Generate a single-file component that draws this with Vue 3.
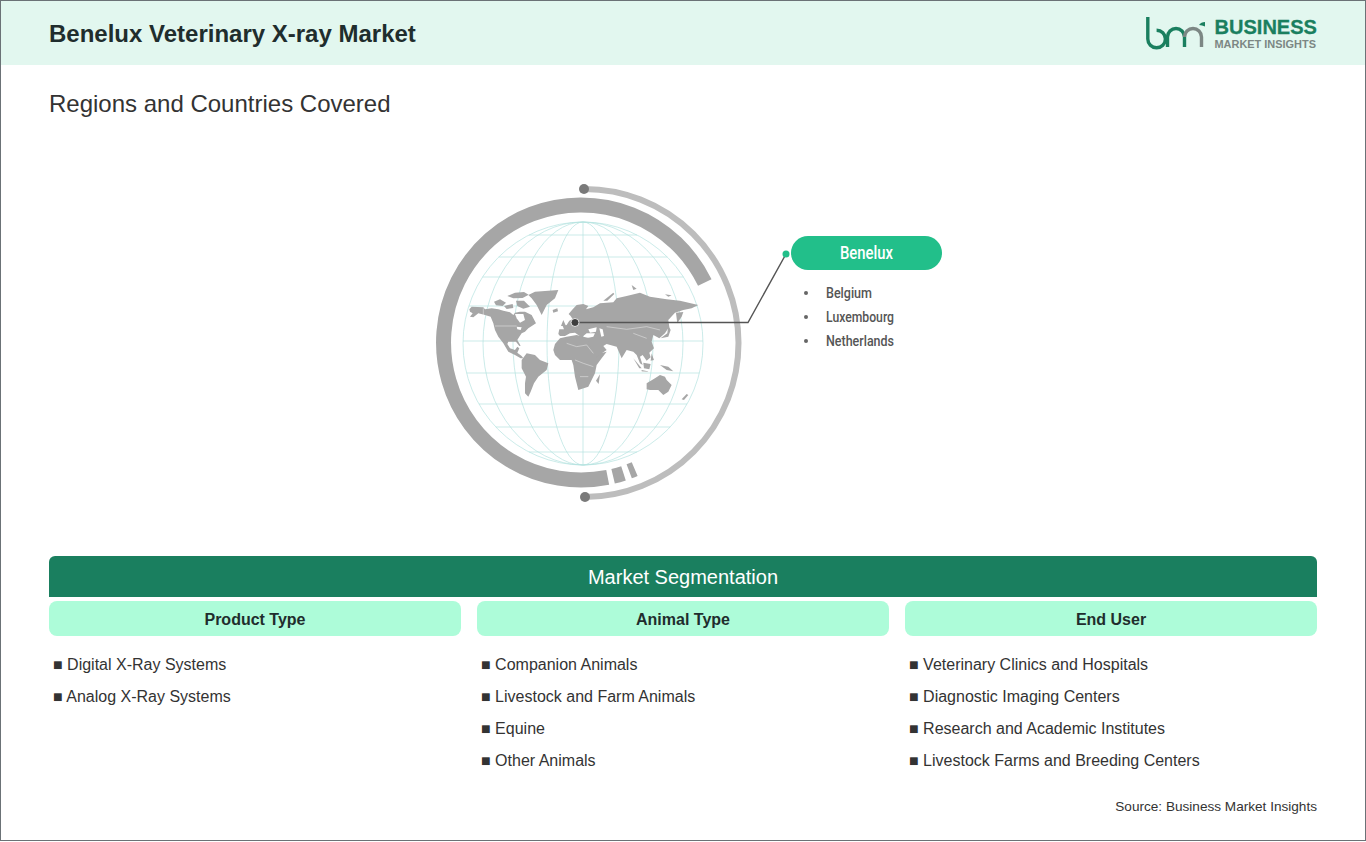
<template>
  <div class="report">
    <header class="report__header">
      <h1 class="report__title">Benelux Veterinary X-ray Market</h1>
      <svg class="logo" width="192" height="36" viewBox="1145 15 192 36">
        <g fill="none" stroke-width="3.400">
          <path d="M1147.800 17V39A8.800 8.800 0 1 0 1156.600 30.200" stroke="#1a7f5f" />
          <path d="M1167.500 47V37A8.500 8.500 0 0 1 1184.500 37V47" stroke="#1a7f5f" />
          <path d="M1184.500 37A8.500 8.500 0 0 1 1201.500 37V47" stroke="#7c8784" />
        </g>
        <path d="M1199 25Q1201 22 1205 22L1205 26.500L1202 25.500z" fill="#1a7f5f" />
        <text class="logo__big" x="1214.500" y="34" textLength="102.500" lengthAdjust="spacingAndGlyphs">BUSINESS</text>
        <text class="logo__small" x="1214.500" y="47.500" textLength="101.500" lengthAdjust="spacingAndGlyphs">MARKET INSIGHTS</text>
      </svg>
    </header>

    <h2 class="report__subtitle">Regions and Countries Covered</h2>

    <svg class="globe" width="1268" height="438" viewBox="49 118 1268 438">
      <!-- outer rings -->
      <path d="M704.800 282.600A137.500 137.500 0 1 0 607.700 477.400" fill="none" stroke="#a6a6a6" stroke-width="15" />
      <path d="M613.100 476.200A137.500 137.500 0 0 0 623.500 473.300" fill="none" stroke="#a6a6a6" stroke-width="15" />
      <path d="M629.200 471.300A137.500 137.500 0 0 0 634.700 469.100" fill="none" stroke="#a6a6a6" stroke-width="15" />
      <path d="M584 189A154 154 0 0 1 585 497" fill="none" stroke="#bdbdbd" stroke-width="6" />
      <circle cx="584" cy="189" r="5" fill="#7a7a7a" />
      <circle cx="585" cy="497" r="5" fill="#7a7a7a" />

      <!-- grid -->
      <g fill="none" stroke="#b4e3e0" stroke-width="0.700">
        <ellipse v-for="rx in meridians" :key="rx" cx="583" cy="343.500" :rx="rx" ry="121.500" />
        <line x1="583" y1="222" x2="583" y2="465" />
        <line v-for="l in latitudes" :key="l.y" :x1="l.x1" :y1="l.y" :x2="l.x2" :y2="l.y" />
      </g>

      <!-- land, points are in 3x coordinates -->
      <g transform="translate(420 170) scale(0.3333)">
        <polygon v-for="(pts, i) in land" :key="i" :points="pts" fill="#a6a6a6" />
        <polygon v-for="(pts, i) in water" :key="'w' + i" :points="pts" fill="#fff" />
        <polyline v-for="(pts, i) in borders" :key="'b' + i" :points="pts" fill="none" stroke="#fff" stroke-opacity="0.600" stroke-width="2" />
      </g>

      <!-- callout -->
      <path d="M575 322.500H748L786 254" fill="none" stroke="#555" stroke-width="1.400" />
      <circle cx="575" cy="322.500" r="4" fill="#3d3d3d" stroke="#fff" stroke-width="0.800" />
      <circle cx="786" cy="254" r="3.500" fill="#22bf8a" />
      <rect x="791" y="236" width="151" height="34" rx="17" fill="#22bf8a" />
      <text class="globe__pill" x="840" y="259" textLength="53" lengthAdjust="spacingAndGlyphs">Benelux</text>
      <g v-for="c in countries" :key="c.name">
        <circle cx="806" :cy="c.y - 5" r="2" fill="#666" />
        <text class="globe__item" x="826" :y="c.y" :textLength="c.w" lengthAdjust="spacingAndGlyphs">{{ c.name }}</text>
      </g>
    </svg>

    <section class="seg">
      <div class="seg__bar">Market Segmentation</div>
      <div class="seg__cols">
        <div v-for="col in columns" :key="col.title" class="seg__col">
          <div class="seg__head">{{ col.title }}</div>
          <ul class="seg__list">
            <li v-for="item in col.items" :key="item">■ {{ item }}</li>
          </ul>
        </div>
      </div>
    </section>

    <p class="report__source">Source: Business Market Insights</p>
  </div>
</template>

<script setup>
const meridians = [120, 100, 70, 36]

const latitudes = [235, 257, 277, 306, 341, 373, 404, 427, 452].map((y) => {
  const t = (y - 343.5) / 121.5
  const half = 120 * Math.sqrt(1 - t * t)
  return { y, x1: 583 - half, x2: 583 + half }
})

const land = [
  // north america
  '148,418 155,410 190,412 195,418 215,415 235,418 250,422 270,427 280,435 285,428 300,425 315,425 335,435 348,460 340,465 325,475 315,485 305,490 298,500 292,510 302,527 298,528 288,515 265,515 262,522 270,535 285,540 292,530 298,535 292,548 305,558 310,565 302,565 285,555 265,545 250,520 235,500 225,480 220,460 212,440 195,435 175,430 160,442 150,440 158,430 150,425',
  // greenland
  '325,375 345,365 415,360 405,385 380,405 365,435 350,405 335,385',
  // arctic islands
  '222,395 240,388 258,398 248,408 228,406',
  '262,378 285,368 312,366 326,374 308,384 280,385',
  '288,392 312,392 330,410 310,416 292,408',
  '252,408 278,402 280,414 260,417',
  // south america
  '305,570 320,550 345,555 360,570 385,580 380,600 355,620 342,640 332,665 325,680 315,670 315,640 318,620 305,595',
  // africa
  '400,540 405,522 420,505 440,500 470,495 490,500 510,505 525,520 540,550 560,545 545,565 530,585 525,610 505,650 475,660 465,620 460,585 455,570 420,570 405,555',
  // madagascar
  '528,632 540,613 536,642',
  // eurasia
  '415,492 418,478 432,478 428,468 440,465 448,452 458,448 452,438 446,432 458,418 470,405 490,402 505,408 498,418 520,412 540,400 580,397 590,385 620,378 660,368 690,380 740,388 780,392 835,405 815,415 790,420 765,428 745,450 748,470 735,490 718,505 700,495 695,515 702,535 688,548 692,562 680,572 668,555 660,560 668,585 660,580 650,555 640,545 620,540 605,565 590,530 560,522 550,528 560,540 528,562 510,525 498,505 520,500 525,490 500,490 490,498 485,510 478,497 465,488 450,490 435,498 420,498',
  // kamchatka
  '768,428 790,426 785,440 772,460',
  // japan
  '722,505 742,490 745,465 752,480 745,500',
  // uk, iceland
  '423,468 430,450 438,468',
  '398,420 412,415 414,424 400,428',
  // novaya zemlya, svalbard
  '550,392 580,368 583,372 562,392',
  '635,345 650,356 640,360',
  '735,373 755,376 745,380',
  // indonesia, philippines
  '640,565 665,595 658,595',
  '670,578 692,582 688,598 672,595',
  '695,550 702,570 692,572',
  '720,585 745,590 760,604 740,600',
  '665,600 690,605 665,604',
  // australia
  '680,640 705,625 720,615 735,620 740,630 755,645 745,665 730,675 715,660 690,660 680,658',
  // new zealand
  '785,688 800,672 805,675 792,690',
]

const water = [
  // hudson bay
  '285,432 310,432 315,450 300,458 290,445',
  // black sea, caspian
  '505,478 530,472 528,485 510,488',
  '538,475 548,478 552,498 544,500',
  // great lakes
  '290,470 305,472 302,480 292,478',
]

const borders = [
  '225,468 290,468',
  '190,415 190,435',
  '440,520 470,530 500,525 520,550',
  '465,570 490,580 520,590',
  '480,620 505,620',
  '560,470 620,478 680,470 720,480',
  '640,490 680,505',
]

const countries = [
  { name: 'Belgium', y: 298, w: 46 },
  { name: 'Luxembourg', y: 322, w: 68 },
  { name: 'Netherlands', y: 346, w: 68 },
]

const columns = [
  { title: 'Product Type', items: ['Digital X-Ray Systems', 'Analog X-Ray Systems'] },
  { title: 'Animal Type', items: ['Companion Animals', 'Livestock and Farm Animals', 'Equine', 'Other Animals'] },
  {
    title: 'End User',
    items: [
      'Veterinary Clinics and Hospitals',
      'Diagnostic Imaging Centers',
      'Research and Academic Institutes',
      'Livestock Farms and Breeding Centers',
    ],
  },
]
</script>

<style scoped>
.report {
  box-sizing: border-box;
  height: 841px;
  border: 1px solid #6b7276;
  background: #fff;
  color: #333;
  font-family: 'Liberation Sans', Arial, sans-serif;
}

.report__header {
  display: flex;
  align-items: center;
  justify-content: space-between;
  height: 64px;
  padding: 0 48px;
  background: #e2f7ef;
}

.report__title {
  margin: 0;
  padding-top: 2px;
  font-size: 24px;
  font-weight: 700;
  color: #1f2d2d;
}

.logo {
  display: block;
  margin-right: -20px;
}

.logo__big {
  font-size: 20.500px;
  font-weight: 700;
  fill: #1a7f5f;
  stroke: #1a7f5f;
  stroke-width: 0.300;
}

.logo__small {
  font-size: 10.500px;
  font-weight: 700;
  fill: #7c8784;
}

.report__subtitle {
  margin: 25px 48px 0;
  font-size: 24px;
  line-height: 28px;
  font-weight: 400;
  color: #333;
}

.globe {
  display: block;
  margin: 0 48px;
}

.globe__pill {
  font-family: Roboto, sans-serif;
  font-size: 18px;
  font-weight: 500;
  fill: #fff;
}

.globe__item {
  font-family: Roboto, sans-serif;
  font-size: 14px;
  font-weight: 500;
  fill: #555;
}

.seg {
  margin: 0 48px;
}

.seg__bar {
  height: 41px;
  border-radius: 6px 6px 0 0;
  background: #1a7f5f;
  color: #fff;
  font-size: 20px;
  line-height: 43px;
  text-align: center;
}

.seg__cols {
  display: grid;
  grid-template-columns: repeat(3, 1fr);
  gap: 16px;
  margin-top: 4px;
}

.seg__head {
  height: 35px;
  border-radius: 8px;
  background: #adfcd9;
  color: #1f2d2d;
  font-size: 16px;
  font-weight: 700;
  line-height: 37px;
  text-align: center;
}

.seg__list {
  margin: 13px 0 0;
  padding: 0 0 0 4px;
  list-style: none;
  font-size: 16px;
  line-height: 32px;
  color: #333;
}

.report__source {
  margin: 20px 48px 0;
  font-size: 13.600px;
  line-height: 20px;
  text-align: right;
  color: #333;
}
</style>

<style>
body {
  background: #fff;
}
</style>
